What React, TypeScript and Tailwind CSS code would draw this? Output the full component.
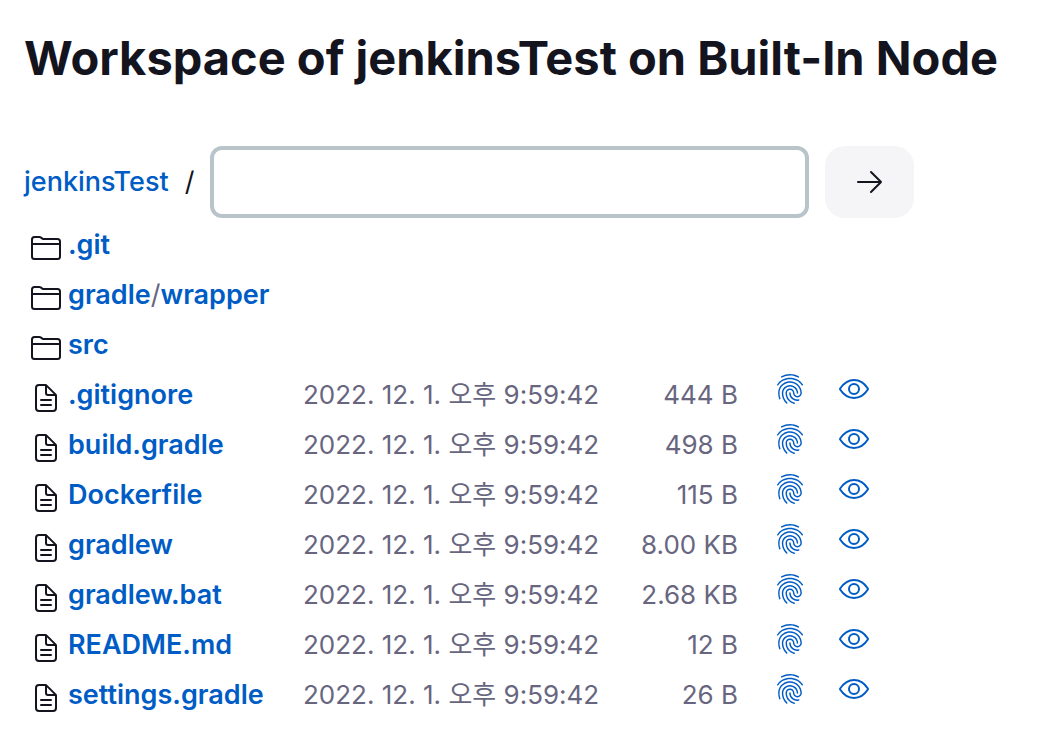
import { IoDocumentTextOutline, IoEyeOutline, IoFingerPrintOutline, IoFolderOutline } from "react-icons/io5";

const FOLDERS = [[".git"], ["gradle", "wrapper"], ["src"]];

const MODIFIED = "2022. 12. 1. 오후 9:59:42";

const FILES = [
  { name: ".gitignore", size: "444 B" },
  { name: "build.gradle", size: "498 B" },
  { name: "Dockerfile", size: "115 B" },
  { name: "gradlew", size: "8.00 KB" },
  { name: "gradlew.bat", size: "2.68 KB" },
  { name: "README.md", size: "12 B" },
  { name: "settings.gradle", size: "26 B" },
];

function FolderRow({ parts }: { parts: string[] }) {
  return (
    <tr className="h-[50px]">
      <td className="w-11 pl-1.5 pt-1.5">
        <IoFolderOutline className="size-8 text-[#14141f]" />
      </td>
      <td colSpan={5} className="whitespace-nowrap text-[27px]">
        {parts.map((part, i) => (
          <span key={part}>
            {i > 0 && "/"}
            <a href={`#${part}`} className="font-semibold text-[#005cc5]">{part}</a>
          </span>
        ))}
      </td>
    </tr>
  );
}

function FileRow({ name, size }: { name: string; size: string }) {
  return (
    <tr className="h-[50px]">
      <td className="w-11 pl-1.5 pt-1.5">
        <IoDocumentTextOutline className="size-8 text-[#14141f]" />
      </td>
      <td className="w-[235px] whitespace-nowrap text-[27px]">
        <a href={`#${name}`} className="font-semibold text-[#005cc5]">{name}</a>
      </td>
      <td className="w-[301px] whitespace-nowrap">{MODIFIED}</td>
      <td className="w-[134px] whitespace-nowrap text-right">{size}</td>
      <td className="w-[100px] pb-3 pl-9">
        <a href={`#${name}-fingerprint`} aria-label={`Fingerprint of ${name}`} className="block text-[#005cc5]">
          <IoFingerPrintOutline className="size-8" />
        </a>
      </td>
      <td className="w-8 pb-3">
        <a href={`#${name}-view`} aria-label={`View ${name}`} className="block text-[#005cc5]">
          <IoEyeOutline className="size-8" />
        </a>
      </td>
    </tr>
  );
}

export default function App() {
  return (
    <main className="bg-white px-6 pt-7 font-['Inter','Noto_Sans_CJK_KR',sans-serif] text-[27px] leading-9 text-[#14141f]">
      <h1 className="text-[47px] font-bold leading-[60px]">Workspace of jenkinsTest on Built-In Node</h1>

      <form className="mt-[58px] flex max-w-[890px] items-center" onSubmit={(e) => e.preventDefault()}>
        <a href="#jenkinsTest" className="font-medium text-[#005cc5]">jenkinsTest</a>
        <span className="px-4">/</span>
        <input
          type="text"
          aria-label="Path"
          className="h-[72px] min-w-0 flex-1 rounded-xl border-4 border-[#b8c3ca] bg-white px-4 outline-none"
        />
        <button
          type="submit"
          aria-label="Go"
          className="ml-4 flex h-[72px] w-[89px] shrink-0 items-center justify-center rounded-[20px] bg-[#f5f5f8]"
        >
          <svg viewBox="0 0 32 32" className="size-8" fill="none" stroke="currentColor" strokeWidth="2" strokeLinecap="round" strokeLinejoin="round">
            <path d="M17 6l10 10-10 10M27 16H4" />
          </svg>
        </button>
      </form>

      <table className="mt-0.5 table-fixed border-collapse text-[26px] text-[#68667f]">
        <tbody>
          {FOLDERS.map((parts) => (
            <FolderRow key={parts[0]} parts={parts} />
          ))}
          {FILES.map((file) => (
            <FileRow key={file.name} {...file} />
          ))}
        </tbody>
      </table>
    </main>
  );
}
